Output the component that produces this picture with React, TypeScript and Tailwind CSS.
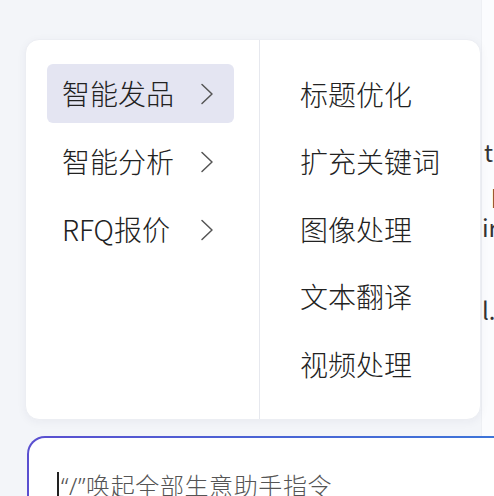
import React from 'react';

const leftItems = ['智能发品', '智能分析', 'RFQ报价'];
const rightItems = ['标题优化', '扩充关键词', '图像处理', '文本翻译', '视频处理'];

function Chevron() {
	return (
		<svg width="14" height="22" viewBox="0 0 14 22" fill="none" className="shrink-0">
			<path d="M2 1.5 L12 11 L2 20.5" stroke="#555" strokeWidth="1.5" strokeLinecap="round" strokeLinejoin="round" />
		</svg>
	);
}

function App() {
	return (
		<div
			className="relative w-[494px] h-[496px] overflow-hidden bg-[#f3f5f9] flex flex-col"
			style={{ fontFamily: '"Noto Sans CJK SC", "Noto Sans", sans-serif' }}
		>
			{/* content behind the popover */}
			<div className="h-[436px] flex justify-end shrink-0">
				<div className="w-[13px] bg-[#fbfcfe] border-l border-[#eef0f4] overflow-hidden text-[24px] leading-none text-[#333] whitespace-nowrap">
					<div className="mt-[140px] pl-[2px]">t</div>
					<div className="mt-[16px] pl-[9px]">p</div>
					<div className="mt-[11px] pl-0">ir</div>
					<div className="mt-[59px] pl-0">l.</div>
				</div>
			</div>

			{/* input */}
			<div className="ml-[27px] flex-1 rounded-tl-[18px] pl-[2px] pt-[2px] bg-gradient-to-r from-[#5a4fd0] via-[#4a63d4] to-[#3d74d8]">
				<div className="h-full rounded-tl-[16px] bg-white pl-[28px] pt-[32px] flex items-start">
					<span className="w-[2px] h-[30px] bg-[#222] mt-[2px] mr-[2px]" />
					<span
						className="text-[24px] leading-[32px] font-light text-[#555] whitespace-nowrap tracking-[0.6px]"
						style={{ fontFamily: '"Noto Sans", "Noto Sans CJK SC", sans-serif' }}
					>
						“/”唤起全部生意助手指令
					</span>
				</div>
			</div>

			{/* popover menu */}
			<div className="absolute left-[25px] top-[39px] w-[456px] h-[381px] bg-white rounded-[14px] border border-[#eceef3] shadow-[0_2px_10px_rgba(30,40,80,0.05)] flex">
				<div className="w-[234px] border-r border-[#e6e8ee] pt-[24px] pl-[21px] pr-[25px] flex flex-col gap-[9px]">
					{leftItems.map((item, i) => (
						<div
							key={item}
							className={
								i === 0
									? 'h-[59px] rounded-[6px] bg-[#e4e5f2] pl-[15px] pr-[20px] flex items-center justify-between'
									: 'h-[59px] rounded-[6px] pl-[15px] pr-[20px] flex items-center justify-between'
							}
						>
							<span className="text-[28px] font-light text-[#222] leading-none mt-[-2px]">{item}</span>
							<Chevron />
						</div>
					))}
				</div>
				<div className="flex-1 pt-[20px] pl-[40px] flex flex-col">
					{rightItems.map((item) => (
						<div key={item} className="h-[67.5px] flex items-center text-[28px] font-light text-[#222] leading-none">
							{item}
						</div>
					))}
				</div>
			</div>
		</div>
	);
}

export default App;
